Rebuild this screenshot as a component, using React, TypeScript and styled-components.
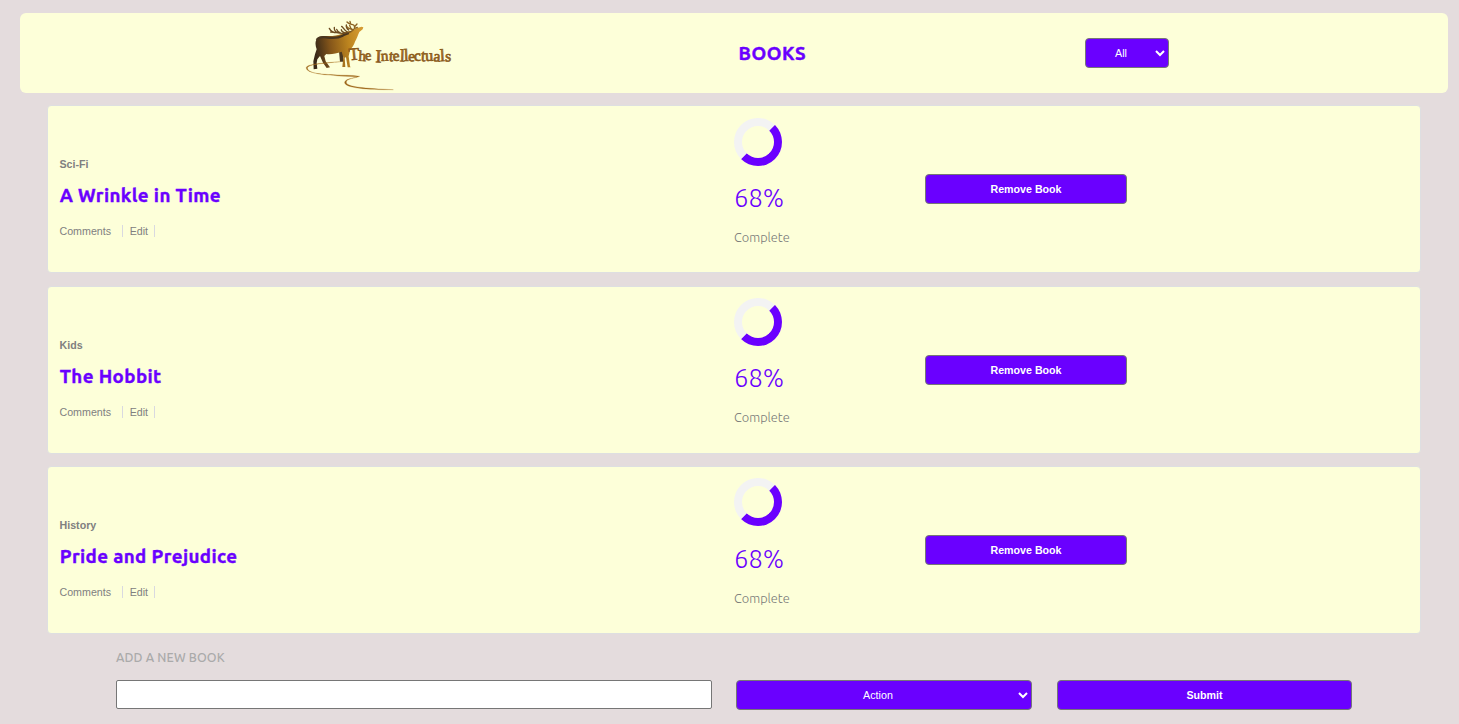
import React from 'react';
import styled, { createGlobalStyle } from 'styled-components';

const purple = '#6a00ff';
const cream = '#fdffd9';
const sans = "'Liberation Sans', Arial, sans-serif";
const display = "Ubuntu, 'Noto Sans', 'Open Sans', sans-serif";

const GlobalStyle = createGlobalStyle`
  * { box-sizing: border-box; }
  html, body { margin: 0; background: #e4dcdd; overflow: hidden; }
  body { font-family: ${sans}; }
`;

const Page = styled.div`
  height: 724px;
  padding: 13px 11px 0 20px;
  display: flex;
  flex-direction: column;
`;

const Header = styled.header`
  flex: none;
  height: 80px;
  display: flex;
  align-items: flex-start;
  background: ${cream};
  border-radius: 6px;
`;

const Logo = styled.svg`
  flex: none;
  margin: 5px 0 0 285px;
  width: 148px;
  height: 74px;
  overflow: visible;
`;

const Heading = styled.h1`
  margin: 27px 0 0 285.5px;
  width: 68px;
  font: 700 18.72px/27px ${display};
  letter-spacing: 0.55px;
  -webkit-text-stroke: 0.4px ${purple};
  color: ${purple};
  white-space: nowrap;
`;

const Select = styled.select<{ $width: number }>`
  flex: none;
  width: ${(p) => p.$width}px;
  height: 30px;
  padding: 0;
  text-align: center;
  border: 1px solid #767676;
  border-radius: 4px;
  background: ${purple};
  color: #fff;
  font: 400 10.72px ${sans};
`;

const HeaderFilter = styled.div`
  margin: 25px 0 0 278.5px;
`;

const List = styled.main`
  flex: none;
  padding: 12.2px 27.5px 0 27px;
  display: flex;
  flex-direction: column;
  gap: 12.2px;
`;

const Card = styled.article`
  height: 168.2px;
  display: grid;
  grid-template-columns: 686px 191px 202px;
  background: ${cream};
  border: 1px solid #dedfe1;
  border-radius: 4px;
`;

const Info = styled.div`
  padding: 51px 0 0 11.5px;
`;

const Genre = styled.div`
  font: 700 10.67px/14px ${sans};
  color: #808080;
`;

const Title = styled.h2`
  margin: 11px 0 0 0.2px;
  font: 700 18.72px/27px ${display};
  letter-spacing: 0.4px;
  -webkit-text-stroke: 0.4px ${purple};
  color: ${purple};
`;

const Links = styled.div`
  display: flex;
  margin-top: 16px;
`;

const Link = styled.span<{ $width: number }>`
  width: ${(p) => p.$width}px;
  height: 12px;
  margin-right: 6.7px;
  border-right: 1px solid #d9d9e0;
  font: 400 10.67px/12px ${sans};
  color: #808080;
`;

const Progress = styled.div`
  padding-top: 11.4px;
`;

const Ring = styled.div`
  width: 48px;
  height: 48px;
  border: 8px solid #f3f3f3;
  border-right-color: ${purple};
  border-bottom-color: ${purple};
  border-radius: 50%;
`;

const Percent = styled.div`
  margin-top: 14.4px;
  font: 300 25.5px/36px Ubuntu, 'Open Sans', 'Noto Sans', sans-serif;
  color: ${purple};
`;

const Complete = styled.div`
  margin-top: 12px;
  font: 300 12.8px/18px Ubuntu, 'Open Sans', 'Noto Sans', sans-serif;
  color: #777;
`;

const Button = styled.button<{ $width: number }>`
  flex: none;
  width: ${(p) => p.$width}px;
  height: 30px;
  padding: 0;
  border: 1px solid #767676;
  border-radius: 4px;
  background: ${purple};
  color: #fff;
  font: 700 10.67px ${sans};
`;

const Actions = styled.div`
  padding-top: 68px;
`;

const AddSection = styled.section`
  padding: 13px 0 0 96px;
`;

const AddTitle = styled.h3`
  margin: 0;
  font: 500 12.5px/20px Ubuntu, 'Noto Sans', sans-serif;
  letter-spacing: 0.13px;
  color: #aaa;
`;

const AddForm = styled.form`
  display: flex;
  margin-top: 13px;
`;

const Input = styled.input`
  width: 596px;
  height: 29px;
  margin-right: 24px;
  border: 1px solid #767676;
  border-radius: 2px;
  background: #fff;
`;

const Spacer = styled.div`
  width: 25px;
`;

const LETTERS: { text: string; x: number; y: number; size: number; turn: number }[] = [
  { text: 'T', x: 178, y: 166, size: 52, turn: -5 },
  { text: 'h', x: 205, y: 167, size: 45, turn: 3 },
  { text: 'e', x: 226, y: 166, size: 43, turn: -4 },
  { text: 'I', x: 256, y: 172, size: 55, turn: 2 },
  { text: 'n', x: 273, y: 168, size: 46, turn: -3 },
  { text: 't', x: 296, y: 168, size: 47, turn: 4 },
  { text: 'e', x: 309, y: 168, size: 46, turn: -4 },
  { text: 'l', x: 329, y: 169, size: 52, turn: 2 },
  { text: 'l', x: 342, y: 168, size: 52, turn: -2 },
  { text: 'e', x: 354, y: 168, size: 46, turn: 3 },
  { text: 'c', x: 373, y: 168, size: 46, turn: -3 },
  { text: 't', x: 392, y: 168, size: 50, turn: 3 },
  { text: 'u', x: 406, y: 168, size: 49, turn: -2 },
  { text: 'a', x: 430, y: 169, size: 47, turn: 3 },
  { text: 'l', x: 451, y: 169, size: 52, turn: -3 },
  { text: 's', x: 465, y: 169, size: 47, turn: 2 },
];

const ElkLogo = () => (
  <Logo viewBox="45 39 444 222" role="img" aria-label="The Intellectuals">
    <defs>
      <linearGradient id="hide" gradientUnits="userSpaceOnUse" x1="74" y1="120" x2="218" y2="100">
        <stop offset="0" stopColor="#3a2a18" />
        <stop offset="0.32" stopColor="#85561a" />
        <stop offset="0.7" stopColor="#bd851f" />
        <stop offset="1" stopColor="#d59b32" />
      </linearGradient>
      <linearGradient id="words" gradientUnits="userSpaceOnUse" x1="0" y1="130" x2="0" y2="172">
        <stop offset="0.2" stopColor="#b0771f" />
        <stop offset="1" stopColor="#805019" />
      </linearGradient>
    </defs>
    <path d="M147 138h13v32h-10z" fill="#4a3821" />
    <path
      fill="url(#hide)"
      d="M79 104C84 95 94 92 107 93C126 94 143 92 156 86C166 80 178 79 188 76L199 70L215 65L220 67L218 73L208 81C203 91 201 101 195 110C192 121 185 129 180 136L176 154L180 184L182 187H173L168 157L164 158L166 186H157L160 157L155 140C139 146 122 149 109 147L103 153L107 169L120 187L110 189L99 173L90 153L82 163L80 174L82 191L71 193L70 169L75 148L80 133C76 120 75 111 79 104Z"
    />
    <path
      d="M80 105C87 96 95 95 108 97C129 100 146 99 158 92C165 87 171 87 176 84"
      fill="none"
      stroke="#49361f"
      strokeWidth="7"
    />
    <g fill="none" stroke="#6c4b20" strokeWidth="4" strokeLinecap="round" strokeLinejoin="round">
      <path d="M183 80C168 86 152 86 140 83C132 83 122 78 118 70M132 82L122 81M142 83C135 79 132 75 133 67M152 84C144 81 141 77 140 73M172 81C163 77 161 68 155 64M163 83C156 80 154 78 154 74M176 75C169 70 168 66 169 60" />
      <path d="M184 79C193 73 198 66 191 60C184 57 177 58 171 51M193 66L201 57M194 70L202 67M182 57L180 49M184 73C178 70 173 70 171 65M188 74C181 70 180 66 179 61" stroke="#8c6323" />
    </g>
    <path
      d="M151 170C114 173 53 176 49 187C46 204 91 208 132 209C158 212 183 209 209 214C195 220 169 221 169 231C167 246 225 250 310 254C226 255 160 248 164 231C168 221 188 220 202 215C178 214 155 215 130 211C83 209 48 201 53 187C57 178 103 175 151 170Z"
      fill="#9a6419"
      stroke="#a66e1c"
      strokeWidth="0.8"
    />
    <text fill="url(#words)" stroke="#8a5a1a" strokeWidth="2" fontFamily="'Liberation Serif', serif">
      {LETTERS.map((l, i) => (
        <tspan key={i} x={l.x} y={l.y} rotate={l.turn} fontSize={l.size}>
          {l.text}
        </tspan>
      ))}
    </text>
  </Logo>
);

const books = [
  { genre: 'Sci-Fi', title: 'A Wrinkle in Time' },
  { genre: 'Kids', title: 'The Hobbit' },
  { genre: 'History', title: 'Pride and Prejudice' },
];

export default function App() {
  return (
    <>
      <GlobalStyle />
      <Page>
        <Header>
          <ElkLogo />
          <Heading>BOOKS</Heading>
          <HeaderFilter>
            <Select $width={84} aria-label="Filter">
              <option>All</option>
            </Select>
          </HeaderFilter>
        </Header>
        <List>
          {books.map((book) => (
            <Card key={book.title}>
              <Info>
                <Genre>{book.genre}</Genre>
                <Title>{book.title}</Title>
                <Links>
                  <Link $width={63.5}>Comments</Link>
                  <Link $width={25.3}>Edit</Link>
                </Links>
              </Info>
              <Progress>
                <Ring />
                <Percent>68%</Percent>
                <Complete>Complete</Complete>
              </Progress>
              <Actions>
                <Button $width={202}>Remove Book</Button>
              </Actions>
            </Card>
          ))}
        </List>
        <AddSection>
          <AddTitle>ADD A NEW BOOK</AddTitle>
          <AddForm>
            <Input aria-label="Book title" />
            <Select $width={296} aria-label="Category">
              <option>Action</option>
            </Select>
            <Spacer />
            <Button type="button" $width={295}>Submit</Button>
          </AddForm>
        </AddSection>
      </Page>
    </>
  );
}
